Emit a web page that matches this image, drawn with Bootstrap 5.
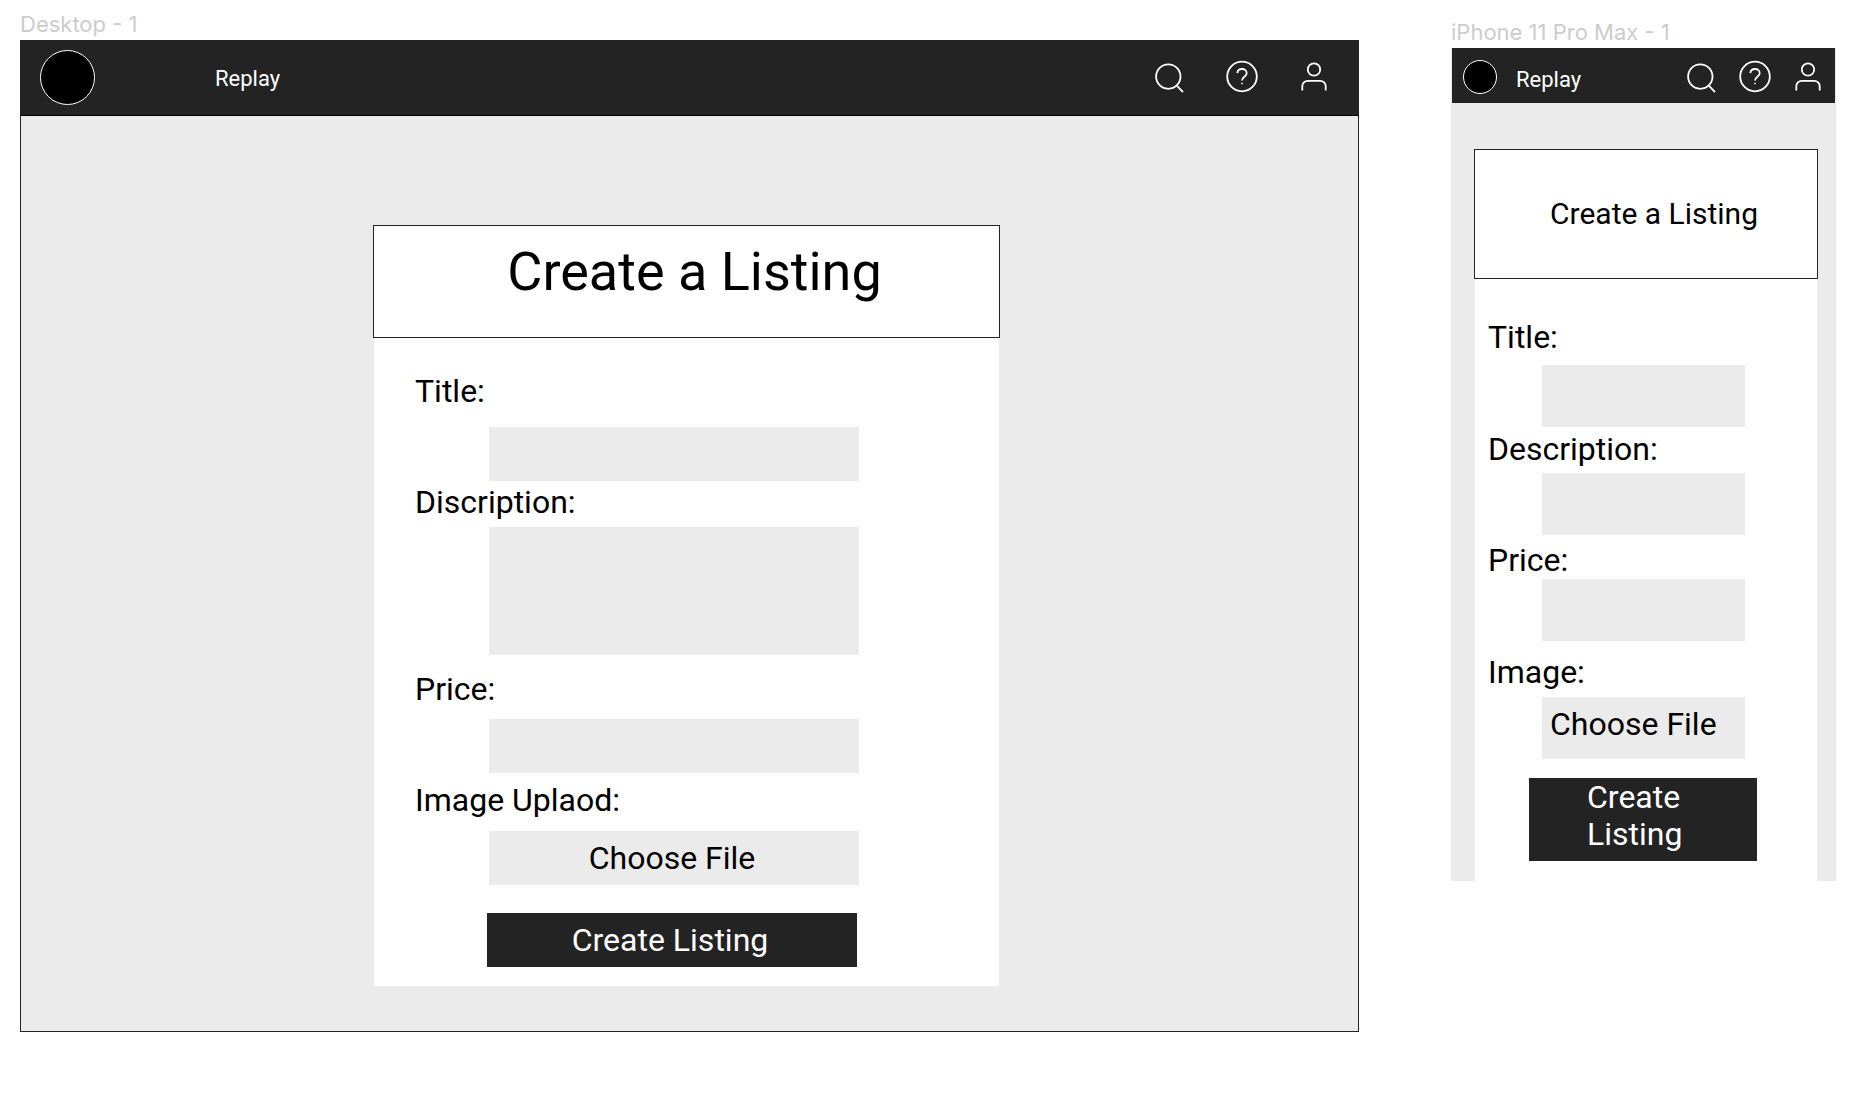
<!DOCTYPE html>
<html lang="en">
<head>
<meta charset="utf-8">
<meta name="viewport" content="width=device-width, initial-scale=1">
<title>Create a Listing</title>
<link href="https://cdn.jsdelivr.net/npm/bootstrap@5.3.0/dist/css/bootstrap.min.css" rel="stylesheet">
<style>
  :root { --ink: #232323; --fog: #ebebeb; }
  body { font-family: Roboto, "Liberation Sans", sans-serif; color: #000; background: #fff; }

  .board { gap: 92px; padding: 12px 16px 32px 20px; }
  .frame-wide { min-width: 0; }
  .frame-phone { width: 385px; padding-top: 8px; }
  .frame-name { font: 400 22px/24px Inter, sans-serif; color: #ccc; margin-bottom: 4px; }
  .screen { background: var(--fog); }
  .frame-wide .screen { border: 1px solid var(--ink); }

  /* top bar */
  .topbar { background: var(--ink); color: #fff; }
  .topbar a { color: #fff; text-decoration: none; }
  .logo-dot { background: #000; border: 1px solid #fff; width: 55px; height: 55px; }
  .site-name { font-size: 22px; line-height: 28px; padding-top: 4px; }
  .icon-set svg { display: block; width: 36px; height: 36px; fill: none; stroke: #fff; stroke-width: 1.8; }
  .frame-wide .topbar { height: 75px; padding: 0 26px 2px 19px; border-bottom: 1px solid #000; }
  .frame-wide .site-name { margin-left: 120px; }
  .frame-wide .icon-set { gap: 36px; }
  .frame-phone .topbar { height: 55px; margin: 0 1px; padding: 2px 9px 0 11px; }
  .frame-phone .logo-dot { width: 34px; height: 34px; }
  .frame-phone .site-name { margin-left: 19px; padding-top: 6px; }
  .frame-phone .icon-set { gap: 17px; }

  /* listing form */
  .stage { padding: 109px 6px 45px 0; }
  .listing { width: 627px; }
  .listing-head { background: #fff; border: 1px solid var(--ink); height: 113px; padding: 14px 0 0 16px; }
  .listing-head h1 { font-size: 54px; line-height: 63px; font-weight: 400; margin: 0; }
  .listing-body { background: #fff; margin: 0 1px; padding: 34px 40px 19px 41px; }
  .field-name { display: block; font-size: 32px; line-height: 38px; }
  .field-box { display: block; width: 370px; max-width: 100%; height: 54px; margin-left: 74px;
    border: 0; border-radius: 0; background: var(--fog); font-size: 32px; line-height: 38px; padding: 0 8px; resize: none; }
  .field-tall { height: 128px; }
  .file-box { padding: 8px 4px 8px 0; text-align: center; cursor: pointer; }
  .send { width: 370px; max-width: 100%; height: 54px; margin: 28px 0 0 72px; padding: 8px 4px 8px 0; border: 0;
    background: var(--ink); color: #fff; font-size: 32px; line-height: 38px; display: block; }
  .g-title { padding-bottom: 2px; }   .g-title .field-box { margin-top: 17px; }
  .g-desc { padding-bottom: 15px; }   .g-desc .field-box { margin-top: 6px; }
  .g-price { padding-bottom: 8px; }   .g-price .field-box { margin-top: 11px; }
  .g-image .field-box { margin-top: 12px; }

  .frame-phone .stage { padding: 46px 18px 0 23px; }
  .frame-phone .listing { width: 100%; }
  .frame-phone .listing-head { height: 130px; padding-top: 0; }
  .frame-phone .listing-head h1 { font-size: 30px; line-height: 36px; }
  .frame-phone .listing-body { padding: 39px 13px 20px; }
  .frame-phone .field-box { width: 203px; height: 62px; margin-left: 54px; }
  .frame-phone .file-box { padding-left: 8px; text-align: left; }
  .frame-phone .send { width: 228px; height: 83px; margin: 19px 0 0 41px; padding: 0 60px 8px 58px; line-height: 37px; text-align: left; }
  .frame-phone .g-title { padding-bottom: 3px; }
  .frame-phone .g-title .field-box { margin-top: 9px; }
  .frame-phone .g-desc { padding-bottom: 6px; }
  .frame-phone .g-desc .field-box { margin-top: 5px; }
  .frame-phone .g-price { padding-bottom: 12px; }
  .frame-phone .g-price .field-box { margin-top: 0; }
  .frame-phone .g-image .field-box { margin-top: 6px; }
</style>
<script src="https://cdn.jsdelivr.net/npm/bootstrap@5.3.0/dist/js/bootstrap.bundle.min.js"></script>
</head>
<body>
<svg class="d-none" aria-hidden="true">
  <symbol id="i-search" viewBox="0 0 36 36"><circle cx="16.3" cy="17.6" r="12.2"/><path d="M24.6 26.4 31 33.2"/></symbol>
  <symbol id="i-help" viewBox="0 0 36 36"><circle cx="18" cy="17.500" r="14.8"/><path d="M13.3 14.1c.3-2.6 2.2-4.1 4.700-4.100 2.700 0 4.700 1.700 4.700 4.200 0 3.500-4.700 3.700-4.700 7.300"/><circle cx="18" cy="24.500" r=".5" fill="#fff" stroke-width="1"/></symbol>
  <symbol id="i-user" viewBox="0 0 36 36"><circle cx="18" cy="10.500" r="6.200"/><path d="M6.300 31.500v-4.200a5.500 5.500 0 0 1 5.500-5.500h12.400a5.500 5.500 0 0 1 5.500 5.500v4.200"/></symbol>
</svg>

<main class="board d-flex align-items-start">
  <section class="frame-wide flex-grow-1">
    <div class="frame-name">Desktop - 1</div>
    <div class="screen">
      <nav class="topbar d-flex align-items-center" aria-label="Desktop">
        <span class="logo-dot rounded-circle flex-shrink-0"></span>
        <a class="site-name" href="#">Replay</a>
        <div class="icon-set d-flex ms-auto">
          <a href="#" aria-label="Search"><svg><use href="#i-search"/></svg></a>
          <a href="#" aria-label="Help"><svg><use href="#i-help"/></svg></a>
          <a href="#" aria-label="Account"><svg><use href="#i-user"/></svg></a>
        </div>
      </nav>
      <div class="stage d-flex justify-content-center">
        <form class="listing">
          <div class="listing-head text-center"><h1>Create a Listing</h1></div>
          <div class="listing-body">
            <div class="g-title"><label class="field-name" for="d-title">Title:</label><input class="field-box" id="d-title" type="text"></div>
            <div class="g-desc"><label class="field-name" for="d-desc">Discription:</label><textarea class="field-box field-tall" id="d-desc"></textarea></div>
            <div class="g-price"><label class="field-name" for="d-price">Price:</label><input class="field-box" id="d-price" type="text"></div>
            <div class="g-image position-relative"><label class="field-name" for="d-file">Image Uplaod:</label><label class="field-box file-box" for="d-file">Choose File</label><input class="visually-hidden" id="d-file" type="file"></div>
            <button class="send" type="button">Create Listing</button>
          </div>
        </form>
      </div>
    </div>
  </section>

  <section class="frame-phone flex-shrink-0">
    <div class="frame-name">iPhone 11 Pro Max - 1</div>
    <div class="screen">
      <nav class="topbar d-flex align-items-center" aria-label="Phone">
        <span class="logo-dot rounded-circle flex-shrink-0"></span>
        <a class="site-name" href="#">Replay</a>
        <div class="icon-set d-flex ms-auto">
          <a href="#" aria-label="Search"><svg><use href="#i-search"/></svg></a>
          <a href="#" aria-label="Help"><svg><use href="#i-help"/></svg></a>
          <a href="#" aria-label="Account"><svg><use href="#i-user"/></svg></a>
        </div>
      </nav>
      <div class="stage">
        <form class="listing">
          <div class="listing-head d-flex align-items-center justify-content-center"><h1>Create a Listing</h1></div>
          <div class="listing-body">
            <div class="g-title"><label class="field-name" for="p-title">Title:</label><input class="field-box" id="p-title" type="text"></div>
            <div class="g-desc"><label class="field-name" for="p-desc">Description:</label><textarea class="field-box" id="p-desc"></textarea></div>
            <div class="g-price"><label class="field-name" for="p-price">Price:</label><input class="field-box" id="p-price" type="text"></div>
            <div class="g-image position-relative"><label class="field-name" for="p-file">Image:</label><label class="field-box file-box" for="p-file">Choose File</label><input class="visually-hidden" id="p-file" type="file"></div>
            <button class="send" type="button">Create Listing</button>
          </div>
        </form>
      </div>
    </div>
  </section>
</main>
</body>
</html>
